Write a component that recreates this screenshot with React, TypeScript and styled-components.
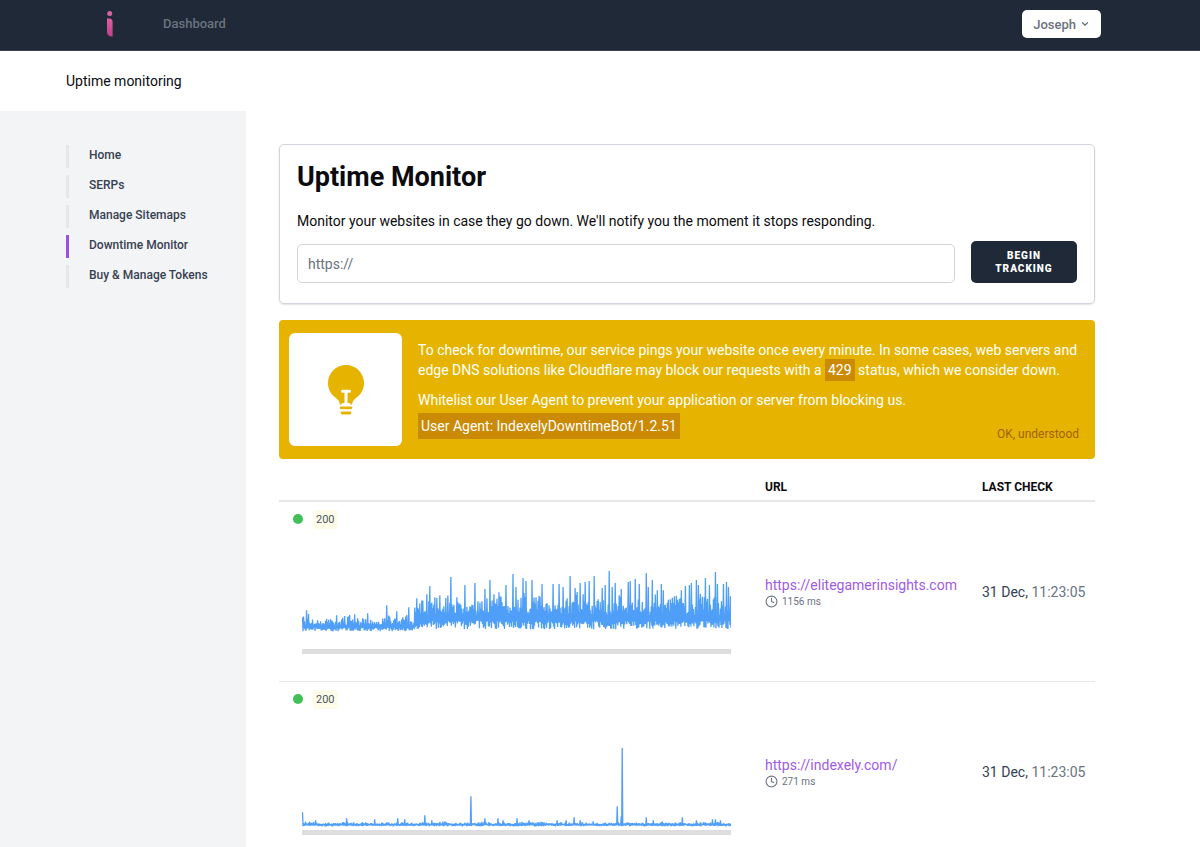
import React from "react";
import styled, { createGlobalStyle } from "styled-components";
import { ChevronDown, Clock } from "lucide-react";

const GlobalStyle = createGlobalStyle`
  *, *::before, *::after { box-sizing: border-box; }
  body {
    margin: 0;
    background: #ffffff;
    color: #0b0b0f;
    font-family: Roboto, "Noto Sans", sans-serif;
    font-size: 14px;
    line-height: 20px;
  }
  h1, p, ul { margin: 0; padding: 0; }
  button, input { font-family: inherit; }
  a { text-decoration: none; }
`;

const gutter = "max(16px, calc((100vw - 1068px) / 2))";

const Page = styled.div`
  min-height: 100vh;
  display: flex;
  flex-direction: column;
`;

const TopBar = styled.header`
  background: #1f2937;
  border-bottom: 1px solid #374151;
  padding: 0 ${gutter};
`;

const TopBarInner = styled.div`
  height: 50px;
  padding: 0 33px 2px 40px;
  display: flex;
  align-items: center;
`;

const LogoLink = styled.a`
  display: flex;
  width: 57px;
`;

const TopLink = styled.a`
  color: #6b7280;
  font-size: 13px;
  font-weight: 500;
`;

const UserButton = styled.button`
  margin-left: auto;
  height: 28px;
  padding: 0 11px;
  display: flex;
  align-items: center;
  gap: 4px;
  border: 0;
  border-radius: 5px;
  background: #ffffff;
  color: #6b7280;
  font-size: 13px;
  font-weight: 500;
`;

const SubHeader = styled.div`
  padding: 20px ${gutter};
`;

const Columns = styled.div`
  flex: 1;
  display: grid;
  grid-template-columns: calc(${gutter} + 180px) minmax(0, 1fr);
`;

const Sidebar = styled.nav`
  background: #f3f4f6;
  padding: 34px 0 0 ${gutter};
`;

const SideList = styled.ul`
  list-style: none;
  display: flex;
  flex-direction: column;
  gap: 7px;
`;

const SideLink = styled.a<{ $active?: boolean }>`
  display: block;
  padding: 0 0 3px 20px;
  border-left: 3px solid ${(p) => (p.$active ? "#9b51e0" : "#e5e7eb")};
  color: #374151;
  font-size: 12px;
  font-weight: 500;
`;

const Main = styled.main`
  max-width: 882px;
  padding: 33px;
`;

const Card = styled.section`
  padding: 17px 17px 20px;
  border: 1px solid #d1d5db;
  border-radius: 5px;
  box-shadow: 0 1px 2px rgba(0, 0, 0, 0.12);
`;

const Title = styled.h1`
  font-size: 27px;
  line-height: 30px;
  font-weight: 700;
`;

const Lead = styled.p`
  margin-top: 19px;
`;

const TrackForm = styled.form`
  margin-top: 10px;
  display: flex;
  align-items: flex-end;
  gap: 16px;
`;

const UrlInput = styled.input`
  flex: 1;
  min-width: 0;
  height: 39px;
  padding: 0 10px;
  border: 1px solid #d1d5db;
  border-radius: 5px;
  background: #ffffff;
  font-size: 14px;
  &::placeholder { color: #6b7280; opacity: 1; }
`;

const TrackButton = styled.button`
  width: 106px;
  height: 42px;
  padding: 0 16px;
  border: 0;
  border-radius: 5px;
  background: #1f2937;
  color: #ffffff;
  font-size: 10px;
  line-height: 13px;
  font-weight: 900;
  letter-spacing: 1px;
  text-transform: uppercase;
`;

const Notice = styled.section`
  margin-top: 16px;
  padding: 13px 16px 13px 10px;
  display: flex;
  gap: 16px;
  border-radius: 4px;
  background: #e6b400;
  color: #ffffff;
`;

const NoticeIcon = styled.div`
  flex: none;
  width: 113px;
  height: 113px;
  display: flex;
  align-items: center;
  justify-content: center;
  border-radius: 6px;
  background: #ffffff;
`;

const NoticeBody = styled.div`
  flex: 1;
  display: flex;
  flex-direction: column;
  gap: 10px;
  padding-top: 7px;
`;

const Mark = styled.span`
  padding: 3px;
  background: #ca8a04;
`;

const NoticeFoot = styled.div`
  display: flex;
  align-items: center;
  justify-content: space-between;
  margin-top: -7px;
`;

const DismissButton = styled.button`
  align-self: flex-end;
  margin-bottom: -3px;
  padding: 0;
  border: 0;
  background: none;
  color: #a16207;
  font-size: 12px;
  line-height: 16px;
`;

const Sites = styled.table`
  width: 100%;
  margin-top: 16px;
  border-collapse: collapse;
  table-layout: fixed;
`;

const Head = styled.th`
  height: 26px;
  padding: 0 12px 3px;
  border-bottom: 2px solid #e5e7eb;
  font-size: 12px;
  font-weight: 700;
  text-align: left;
  text-transform: uppercase;
  vertical-align: bottom;
`;

const Row = styled.tr`
  & + & { border-top: 1px solid #e5e7eb; }
`;

const Cell = styled.td`
  padding: 0 0 0 12px;
  white-space: nowrap;
`;

const GraphCell = styled.td`
  padding: 7px 22px 27px 23px;
`;

const Status = styled.div`
  display: flex;
  align-items: center;
  gap: 10px;
  height: 20px;
  margin-left: -9px;
`;

const Dot = styled.span`
  width: 10px;
  height: 10px;
  border-radius: 50%;
  background: #40c057;
`;

const Code = styled.span`
  padding: 0 3px;
  border-radius: 3px;
  background: #fefce8;
  color: #4b5563;
  font-size: 11px;
  line-height: 19px;
`;

const Graph = styled.svg`
  display: block;
  width: 100%;
  height: auto;
`;

const UptimeBar = styled.div`
  height: 5px;
  background: #dedede;
`;

const SiteLink = styled.a`
  color: #9f5ae8;
`;

const Latency = styled.div`
  display: flex;
  align-items: center;
  gap: 4px;
  color: #6b7280;
  font-size: 10px;
  line-height: 13px;
`;

const Checked = styled.span`
  color: #374151;
`;

const Time = styled.span`
  color: #6b7280;
`;

type Peak = [x: number, y: number];

const busyPeaks: Peak[] = [
  [1, 88], [5, 81], [35, 86], [53, 85], [66, 84], [85, 76], [95, 82], [107, 78], [115, 69], [125, 65],
  [128, 57], [133, 68], [138, 66], [149, 48], [155, 68], [163, 56], [173, 54], [180, 72], [188, 51], [192, 65],
  [197, 63], [204, 56], [211, 45], [214, 58], [221, 49], [224, 52], [230, 51], [234, 68], [240, 55], [251, 55],
  [257, 55], [261, 58], [268, 47], [273, 59], [278, 54], [283, 53], [287, 52], [292, 47], [296, 70], [300, 59],
  [303, 56], [307, 42], [310, 58], [313, 54], [319, 60], [326, 53], [328, 52], [333, 50], [337, 55], [344, 44],
  [346, 58], [350, 51], [355, 61], [359, 55], [361, 61], [368, 70], [372, 67], [379, 61], [383, 57], [387, 56],
  [389, 54], [394, 51], [396, 56], [403, 49], [407, 56], [413, 43], [415, 55], [421, 55], [424, 53], [426, 58], [428, 67],
];

const quietPeaks: Peak[] = [
  [1, 103], [14, 111], [45, 109], [73, 110], [96, 109], [103, 110], [123, 106], [130, 111], [169, 87], [183, 109],
  [196, 109], [201, 111], [215, 109], [227, 111], [255, 111], [264, 111], [272, 108], [278, 111], [291, 112],
  [315, 97], [319, 107], [320, 39], [344, 108], [351, 111], [380, 108], [394, 111], [410, 110], [413, 110], [418, 111],
];

function trace(peaks: Peak[], band: (x: number) => { top: number; mid: number; low: number }, seed: number) {
  let state = seed;
  const next = () => {
    state = (state * 16807) % 2147483647;
    return state / 2147483647;
  };
  const tips = new Map(peaks);
  const points: string[] = [];
  for (let x = 1; x <= 428; x++) {
    const { top, mid, low } = band(x);
    const swell = 0.65 + 0.35 * Math.sin(x / 4.3) * Math.sin(x / 11 + 1);
    const high = tips.get(x) ?? mid - (mid - top) * next() * swell;
    const dip = low - (low - mid) * next() * 0.6;
    points.push(`${x - 0.5},${high.toFixed(1)}`, `${x},${dip.toFixed(1)}`);
  }
  return points.join(" ");
}

const busyTrace = trace(
  busyPeaks,
  (x) => (x < 113 ? { top: 84, mid: 96, low: 102 } : { top: 59, mid: 86, low: 100 }),
  4211,
);

const quietTrace = trace(quietPeaks, () => ({ top: 112, mid: 115, low: 117 }), 977);

const sites = [
  { url: "https://elitegamerinsights.com", ms: 1156, code: 200, date: "31 Dec", time: "11:23:05", points: busyTrace },
  { url: "https://indexely.com/", ms: 271, code: 200, date: "31 Dec", time: "11:23:05", points: quietTrace },
];

const sections = ["Home", "SERPs", "Manage Sitemaps", "Downtime Monitor", "Buy & Manage Tokens"];

function Logo() {
  return (
    <svg width="8" height="26" viewBox="0 0 8 26" aria-hidden="true">
      <defs>
        <linearGradient id="logoFill" x1="0" y1="0" x2="0" y2="1">
          <stop offset="0" stopColor="#e0609f" />
          <stop offset="1" stopColor="#c63c8c" />
        </linearGradient>
      </defs>
      <circle cx="3.7" cy="2.6" r="2.5" fill="#d9629f" />
      <path d="M1 7.500h2.600c1.800 0 3 1.400 3 3.200V25.500H5.600C3 25.500 1 23.600 1 21z" fill="url(#logoFill)" />
    </svg>
  );
}

function Bulb() {
  return (
    <svg width="38" height="52" viewBox="0 0 38 52" aria-hidden="true">
      <path
        d="M19 1C9 1 1 9 1 19c0 7 3.500 12 8.500 15.500 2 1.400 3 3.500 3.500 6h12c.5-2.500 1.500-4.600 3.500-6C33.500 31 37 26 37 19 37 9 29 1 19 1z"
        fill="#e6b400"
      />
      <path d="M15.500 27.300h7M19 27.300V41M16 40.600h6" stroke="#ffffff" strokeWidth="3" strokeLinecap="round" fill="none" />
      <path d="M14 43.800h10M15 49h8" stroke="#e6b400" strokeWidth="2.800" strokeLinecap="round" />
    </svg>
  );
}

export default function App() {
  return (
    <Page>
      <GlobalStyle />
      <TopBar>
        <TopBarInner>
          <LogoLink href="#" aria-label="Indexely"><Logo /></LogoLink>
          <TopLink href="#">Dashboard</TopLink>
          <UserButton type="button">
            Joseph
            <ChevronDown size={10} strokeWidth={3} />
          </UserButton>
        </TopBarInner>
      </TopBar>
      <SubHeader>Uptime monitoring</SubHeader>
      <Columns>
        <Sidebar>
          <SideList>
            {sections.map((name) => (
              <li key={name}>
                <SideLink href="#" $active={name === "Downtime Monitor"}>{name}</SideLink>
              </li>
            ))}
          </SideList>
        </Sidebar>
        <Main>
          <Card>
            <Title>Uptime Monitor</Title>
            <Lead>Monitor your websites in case they go down. We'll notify you the moment it stops responding.</Lead>
            <TrackForm>
              <UrlInput type="url" placeholder="https://" aria-label="Website address" />
              <TrackButton type="button">Begin tracking</TrackButton>
            </TrackForm>
          </Card>
          <Notice>
            <NoticeIcon><Bulb /></NoticeIcon>
            <NoticeBody>
              <p>
                To check for downtime, our service pings your website once every minute. In some cases, web servers and
                edge DNS solutions like Cloudflare may block our requests with a <Mark>429</Mark> status, which we
                consider down.
              </p>
              <p>Whitelist our User Agent to prevent your application or server from blocking us.</p>
              <NoticeFoot>
                <Mark>User Agent: IndexelyDowntimeBot/1.2.51</Mark>
                <DismissButton type="button">OK, understood</DismissButton>
              </NoticeFoot>
            </NoticeBody>
          </Notice>
          <Sites>
            <colgroup>
              <col />
              <col style={{ width: 217 }} />
              <col style={{ width: 125 }} />
            </colgroup>
            <thead>
              <tr>
                <Head aria-label="Status" />
                <Head>URL</Head>
                <Head>Last check</Head>
              </tr>
            </thead>
            <tbody>
              {sites.map((site) => (
                <Row key={site.url}>
                  <GraphCell>
                    <Status>
                      <Dot />
                      <Code>{site.code}</Code>
                    </Status>
                    <Graph viewBox="0 0 428 120" role="img" aria-label="Response time">
                      <polyline points={site.points} fill="none" stroke="#4f9ff8" strokeWidth="1.300" strokeLinejoin="bevel" />
                    </Graph>
                    <UptimeBar />
                  </GraphCell>
                  <Cell>
                    <SiteLink href="#">{site.url}</SiteLink>
                    <Latency>
                      <Clock size={13} />
                      {site.ms} ms
                    </Latency>
                  </Cell>
                  <Cell>
                    <Checked>{site.date},</Checked> <Time>{site.time}</Time>
                  </Cell>
                </Row>
              ))}
            </tbody>
          </Sites>
        </Main>
      </Columns>
    </Page>
  );
}
